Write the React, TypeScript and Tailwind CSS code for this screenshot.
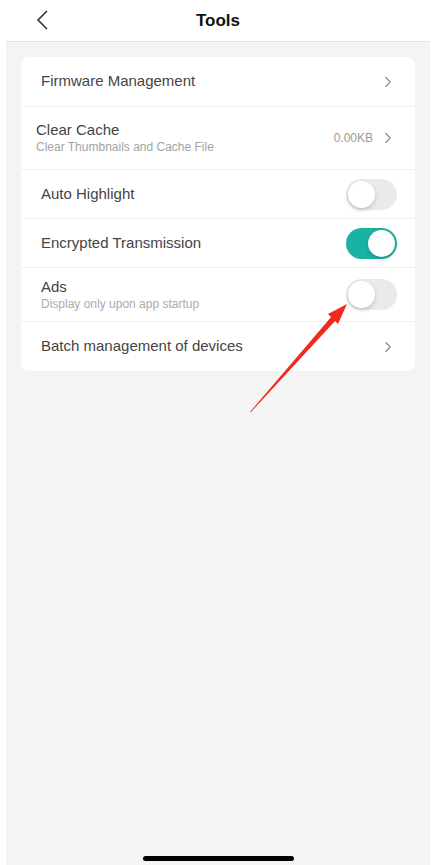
import { ChevronRight } from "lucide-react"

function Toggle({ on }: { on: boolean }) {
  return (
    <div
      className={`w-[51px] h-[31px] rounded-full p-[2px] flex items-center ${
        on ? "bg-[#1ab3a3] justify-end" : "bg-[#eaeaea] justify-start"
      }`}
    >
      <div className="w-[27px] h-[27px] rounded-full bg-white shadow-[0_2px_4px_rgba(0,0,0,0.18)]" />
    </div>
  )
}

function Chevron() {
  return <ChevronRight className="w-[18px] h-[18px] text-[#888]" strokeWidth={1.5} />
}

export default function App() {
  return (
    <div
      className="relative w-[433px] h-[865px] bg-white flex flex-col overflow-hidden"
      style={{ fontFamily: '"Liberation Sans", Arial, sans-serif' }}
    >
      {/* Header */}
      <div className="h-[42px] shrink-0 flex items-center justify-center relative border-b border-[#e2e2e2] ml-[6px] mr-[3px]">
        <svg className="absolute left-[30px] top-[9px]" width="14" height="22" viewBox="0 0 14 22">
          <path d="M11 2 L2 11 L11 20" fill="none" stroke="#333" strokeWidth="1.6" />
        </svg>
        <span className="text-[17px] font-bold text-[#111]">Tools</span>
      </div>

      {/* Body */}
      <div className="flex-1 bg-[#f4f4f4] ml-[6px] mr-[3px] pt-[15px] px-[15px]">
        <div className="bg-white rounded-[8px] flex flex-col">
          <div className="h-[50px] flex items-center justify-between pl-[20px] pr-[18px] border-b border-[#f0f0f0]">
            <span className="text-[15px] text-[#444]">Firmware Management</span>
            <Chevron />
          </div>
          <div className="h-[63px] flex items-center justify-between pl-[15px] pr-[18px] border-b border-[#f0f0f0]">
            <div className="flex flex-col">
              <span className="text-[15px] text-[#444] leading-[18px]">Clear Cache</span>
              <span className="text-[12px] text-[#a3a3a3] leading-[16px]">Clear Thumbnails and Cache File</span>
            </div>
            <div className="flex items-center gap-[6px]">
              <span className="text-[12px] text-[#999]">0.00KB</span>
              <Chevron />
            </div>
          </div>
          <div className="h-[49px] flex items-center justify-between pl-[20px] pr-[18px] border-b border-[#f0f0f0]">
            <span className="text-[15px] text-[#444]">Auto Highlight</span>
            <Toggle on={false} />
          </div>
          <div className="h-[49px] flex items-center justify-between pl-[20px] pr-[18px] border-b border-[#f0f0f0]">
            <span className="text-[15px] text-[#444]">Encrypted Transmission</span>
            <Toggle on={true} />
          </div>
          <div className="h-[54px] flex items-center justify-between pl-[20px] pr-[18px] border-b border-[#f0f0f0]">
            <div className="flex flex-col">
              <span className="text-[15px] text-[#444] leading-[18px]">Ads</span>
              <span className="text-[12px] text-[#ababab] leading-[16px]">Display only upon app startup</span>
            </div>
            <Toggle on={false} />
          </div>
          <div className="h-[49px] flex items-center justify-between pl-[20px] pr-[18px]">
            <span className="text-[15px] text-[#444]">Batch management of devices</span>
            <Chevron />
          </div>
        </div>
      </div>

      {/* Annotation arrow */}
      <svg className="absolute left-0 top-0 pointer-events-none" width="433" height="865">
        <polygon points="250,412 251,412 336,320 332,316" fill="#f02a1e" />
        <polygon points="347,304 328,314 338,324" fill="#f02a1e" />
      </svg>

      {/* Home indicator */}
      <div className="absolute bottom-[4px] left-[143px] w-[151px] h-[5px] rounded-full bg-black" />
    </div>
  )
}
